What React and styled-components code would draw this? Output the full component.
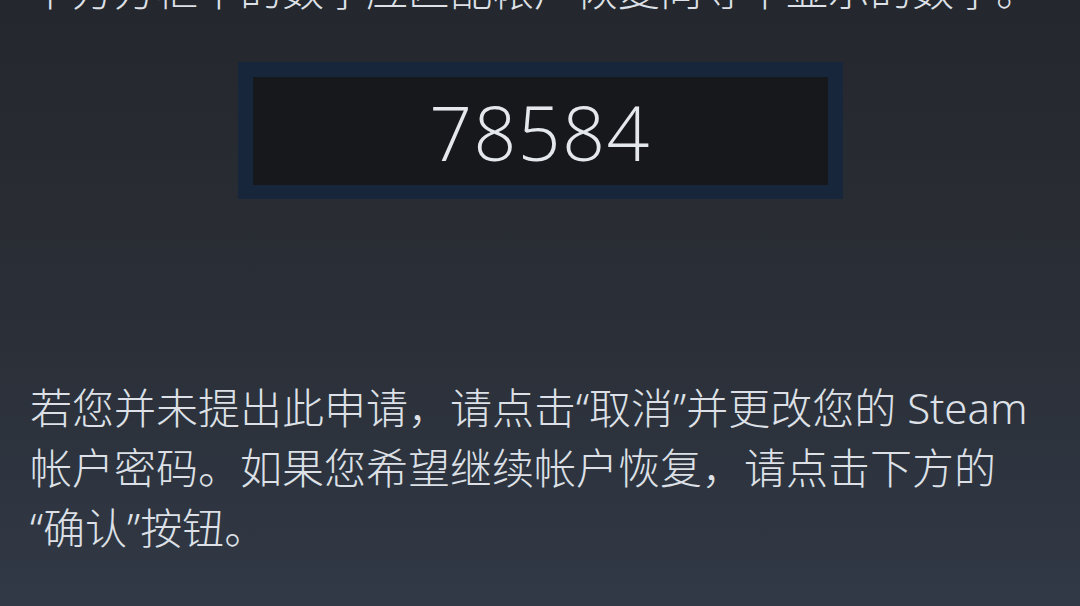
import styled, { createGlobalStyle } from "styled-components";

const GlobalStyle = createGlobalStyle`
  html, body {
    margin: 0;
    padding: 0;
    height: 100%;
  }
  body {
    background: #25282e;
    overflow: hidden;
  }
`;

const Page = styled.div`
  width: 1080px;
  height: 606px;
  overflow: hidden;
  background: linear-gradient(180deg, #24272d 0%, #2a2e36 50%, #313946 100%);
  color: #dde1e7;
  font-family: "Noto Sans", "Noto Sans CJK SC", sans-serif;
  font-weight: 300;
`;

const Content = styled.div`
  margin-top: -40px;
  padding: 0 30px;
  display: flex;
  flex-direction: column;
`;

const Paragraph = styled.p`
  margin: 0;
  font-size: 42px;
  line-height: 60px;
  white-space: ${(p) => (p.nowrap ? "nowrap" : "normal")};
  margin-top: ${(p) => p.top || "0"};
`;

const CodeFrame = styled.div`
  align-self: center;
  margin-top: 42px;
  width: 605px;
  height: 137px;
  box-sizing: border-box;
  border: 15px solid #17263b;
  border-bottom-width: 14px;
  background: #16181c;
  display: flex;
  align-items: center;
  justify-content: center;
`;

const Code = styled.span`
  font-family: "Open Sans", "Noto Sans", sans-serif;
  font-weight: 300;
  font-size: 75px;
  letter-spacing: 1.5px;
  color: #e4e7ec;
  line-height: 1;
  margin-top: 2px;
`;

export default function App() {
  return (
    <>
      <GlobalStyle />
      <Page>
        <Content>
          <Paragraph nowrap>
            下方方框中的数字应匹配帐户恢复向导中显示的数字。
          </Paragraph>
          <CodeFrame>
            <Code>78584</Code>
          </CodeFrame>
          <Paragraph top="179px">
            若您并未提出此申请，请点击“取消”并更改您的 Steam
            帐户密码。如果您希望继续帐户恢复，请点击下方的
            <br />
            “确认”按钮。
          </Paragraph>
        </Content>
      </Page>
    </>
  );
}
